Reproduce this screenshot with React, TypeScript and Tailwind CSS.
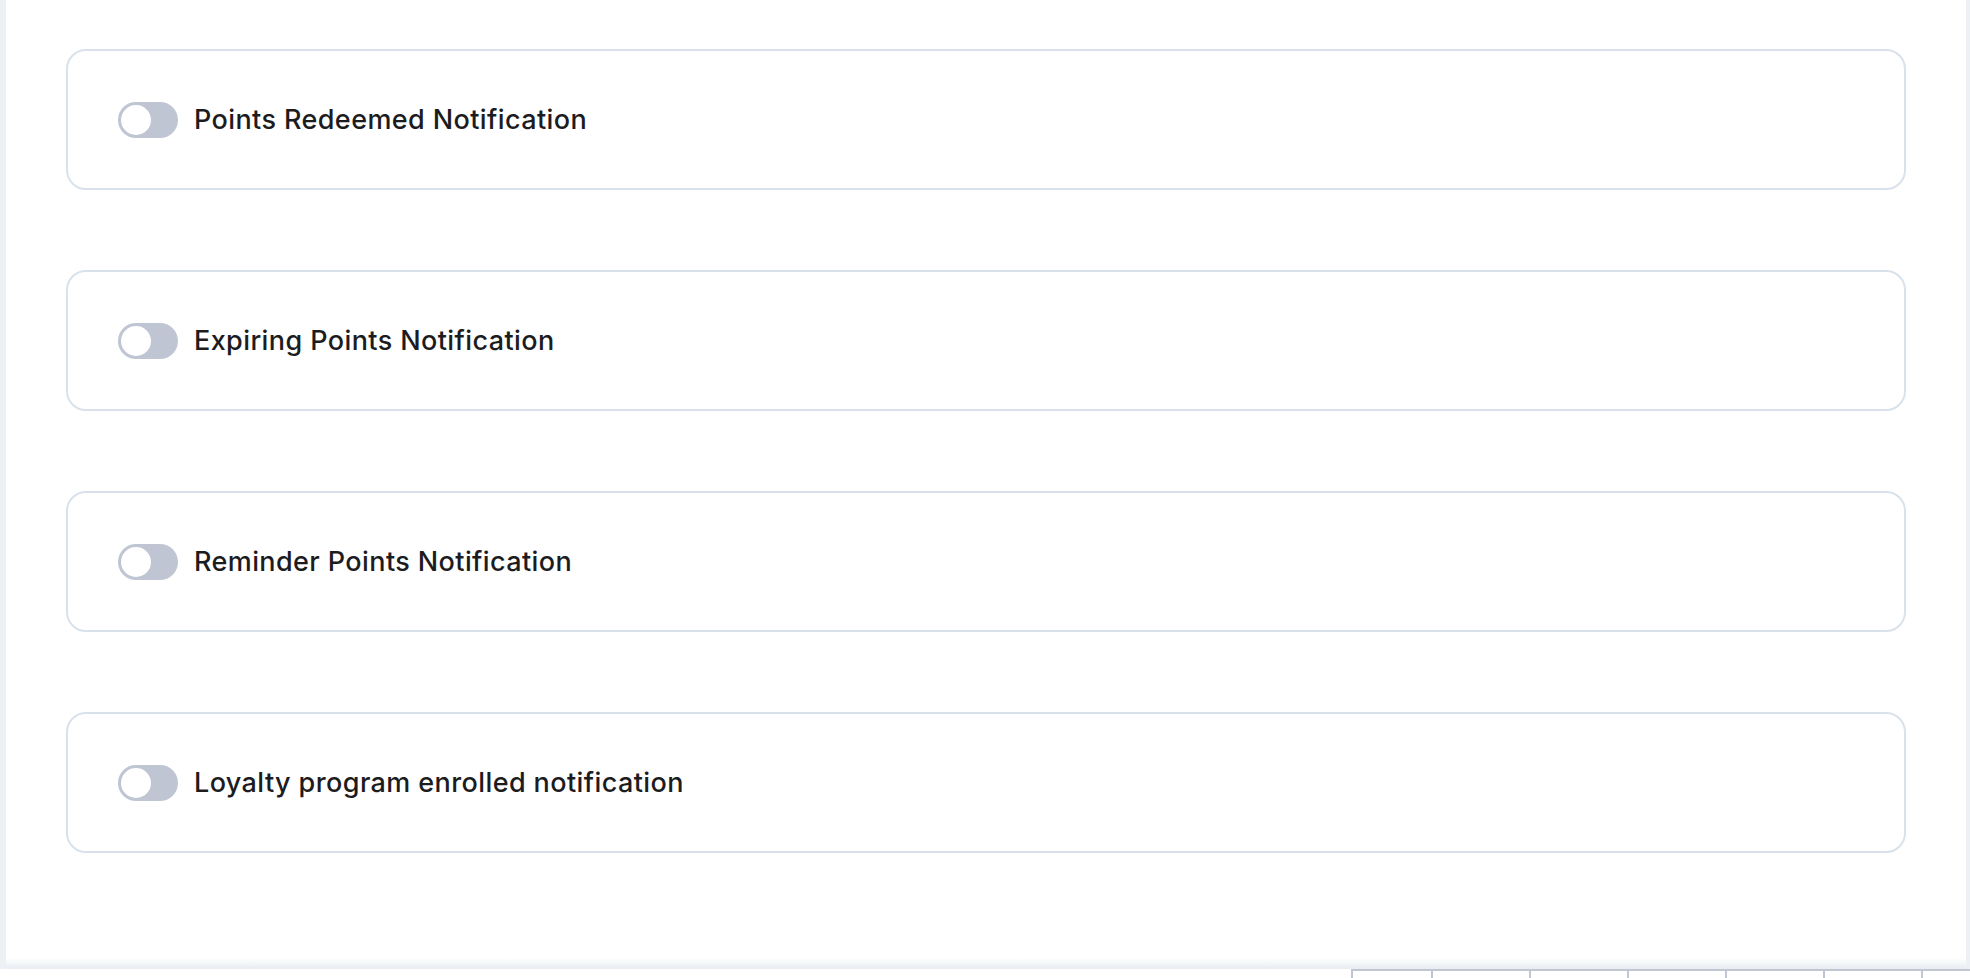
import React from "react";

const items = [
  "Points Redeemed Notification",
  "Expiring Points Notification",
  "Reminder Points Notification",
  "Loyalty program enrolled notification",
];

function Toggle() {
  return (
    <div className="flex h-[36px] w-[60px] shrink-0 items-center rounded-full bg-[#bfc5d2] px-[3px]">
      <div className="h-[30px] w-[30px] rounded-full bg-white" />
    </div>
  );
}

const tickCols = [80, 98, 98, 98, 98, 98];

export default function App() {
  return (
    <div
      className="relative h-[978px] w-[1970px] overflow-hidden bg-white"
      style={{ fontFamily: "Inter, 'Open Sans', sans-serif" }}
    >
      <div className="flex h-[969px]">
        <div className="w-[6px] shrink-0 bg-[#edf0f5]" />
        <div className="relative flex flex-1 flex-col bg-white">
          <div className="flex flex-col gap-[80px] px-[60px] pt-[49px]">
            {items.map((t) => (
              <div
                key={t}
                className="flex h-[141px] items-center gap-[16px] rounded-[20px] border-2 border-[#d9e2eb] pl-[50px]"
              >
                <Toggle />
                <span className="text-[27px] font-medium leading-none tracking-[0.4px] text-[#1c1c1e]">
                  {t}
                </span>
              </div>
            ))}
          </div>
          <div className="absolute bottom-0 left-0 right-0 h-[11px] bg-gradient-to-b from-white to-[#e8ecf1]" />
        </div>
        <div className="w-[4px] shrink-0 bg-[#edf0f5]" />
      </div>
      <div className="flex h-[9px]">
        <div className="w-[1351px] shrink-0 bg-white" />
        <div className="flex flex-1 border-t-2 border-[#c0c6d3]">
          {tickCols.map((w, i) => (
            <div
              key={i}
              className="h-full shrink-0 border-l-2 border-[#c0c6d3]"
              style={{ width: w }}
            />
          ))}
          <div className="flex-1 border-l-2 border-[#c0c6d3]" />
        </div>
      </div>
    </div>
  );
}
